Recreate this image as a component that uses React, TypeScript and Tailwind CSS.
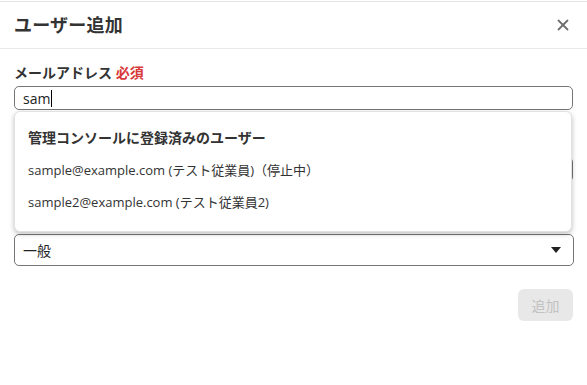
import { X } from "lucide-react";

const font = { fontFamily: '"Open Sans", "Noto Sans CJK JP", sans-serif' };

const App = () => {
  return (
    <div className="w-[587px] h-[385px] bg-white pt-px text-[#333]" style={font}>
      <div className="border-t border-[#e5e5e5]">
        <div className="h-[47px] flex items-center justify-between pl-[14px] pr-[15px] border-b border-[#e8e8e8]">
          <h1 className="text-[18px] font-bold text-[#333] tracking-[0.2px]">ユーザー追加</h1>
          <X className="h-[18px] w-[18px] text-[#707070]" strokeWidth={2.4} />
        </div>

        <div className="relative px-[14px] pt-[14px]">
          <label className="block text-[14px] font-bold leading-[20px] text-[#333]">
            メールアドレス <span className="text-[#d8383a]">必須</span>
          </label>
          <div className="mt-[3px] h-[24px] w-[559px] rounded-[5px] border border-[#767676] flex items-center pl-[8px] text-[14px] text-[#222]">
            <span>sam</span>
            <span className="ml-px h-[17px] w-px bg-black" />
          </div>

          {/* field hidden under the suggestion list */}
          <div className="mt-[24px] h-[20px]" />
          <div className="mt-[3px] h-[25px] w-[559px] rounded-[5px] border border-[#767676]" />

          <div className="mt-[31px] h-[20px]" />
          <div className="mt-[1px] h-[32px] w-[560px] rounded-[5px] border border-[#767676] flex items-center justify-between pl-[8px] pr-[12px] text-[14px] text-[#222]">
            <span>一般</span>
            <svg width="10" height="6" viewBox="0 0 10 6">
              <path d="M0 0 L10 0 L5 6 Z" fill="#222" />
            </svg>
          </div>

          <div className="mt-[23px] flex justify-end">
            <button
              disabled
              className="h-[32px] w-[55px] rounded-[6px] bg-[#e8e8e8] text-[14px] text-[#c2c2c2]"
            >
              追加
            </button>
          </div>

          <div className="absolute left-[14px] top-[62px] w-[558px] h-[121px] rounded-[6px] bg-white border border-[#e2e2e2] shadow-[0_2px_5px_rgba(0,0,0,0.25)] pl-[13px] pt-[16px]">
            <div className="text-[14px] font-bold leading-[20px] text-[#333]">
              管理コンソールに登録済みのユーザー
            </div>
            <div className="mt-[12px] text-[13px] leading-[20px] text-[#333]">
              sample@example.com (テスト従業員)（停止中）
            </div>
            <div className="mt-[12px] text-[13px] leading-[20px] text-[#333]">
              sample2@example.com (テスト従業員2)
            </div>
          </div>
        </div>
      </div>
    </div>
  );
};

export default App;
